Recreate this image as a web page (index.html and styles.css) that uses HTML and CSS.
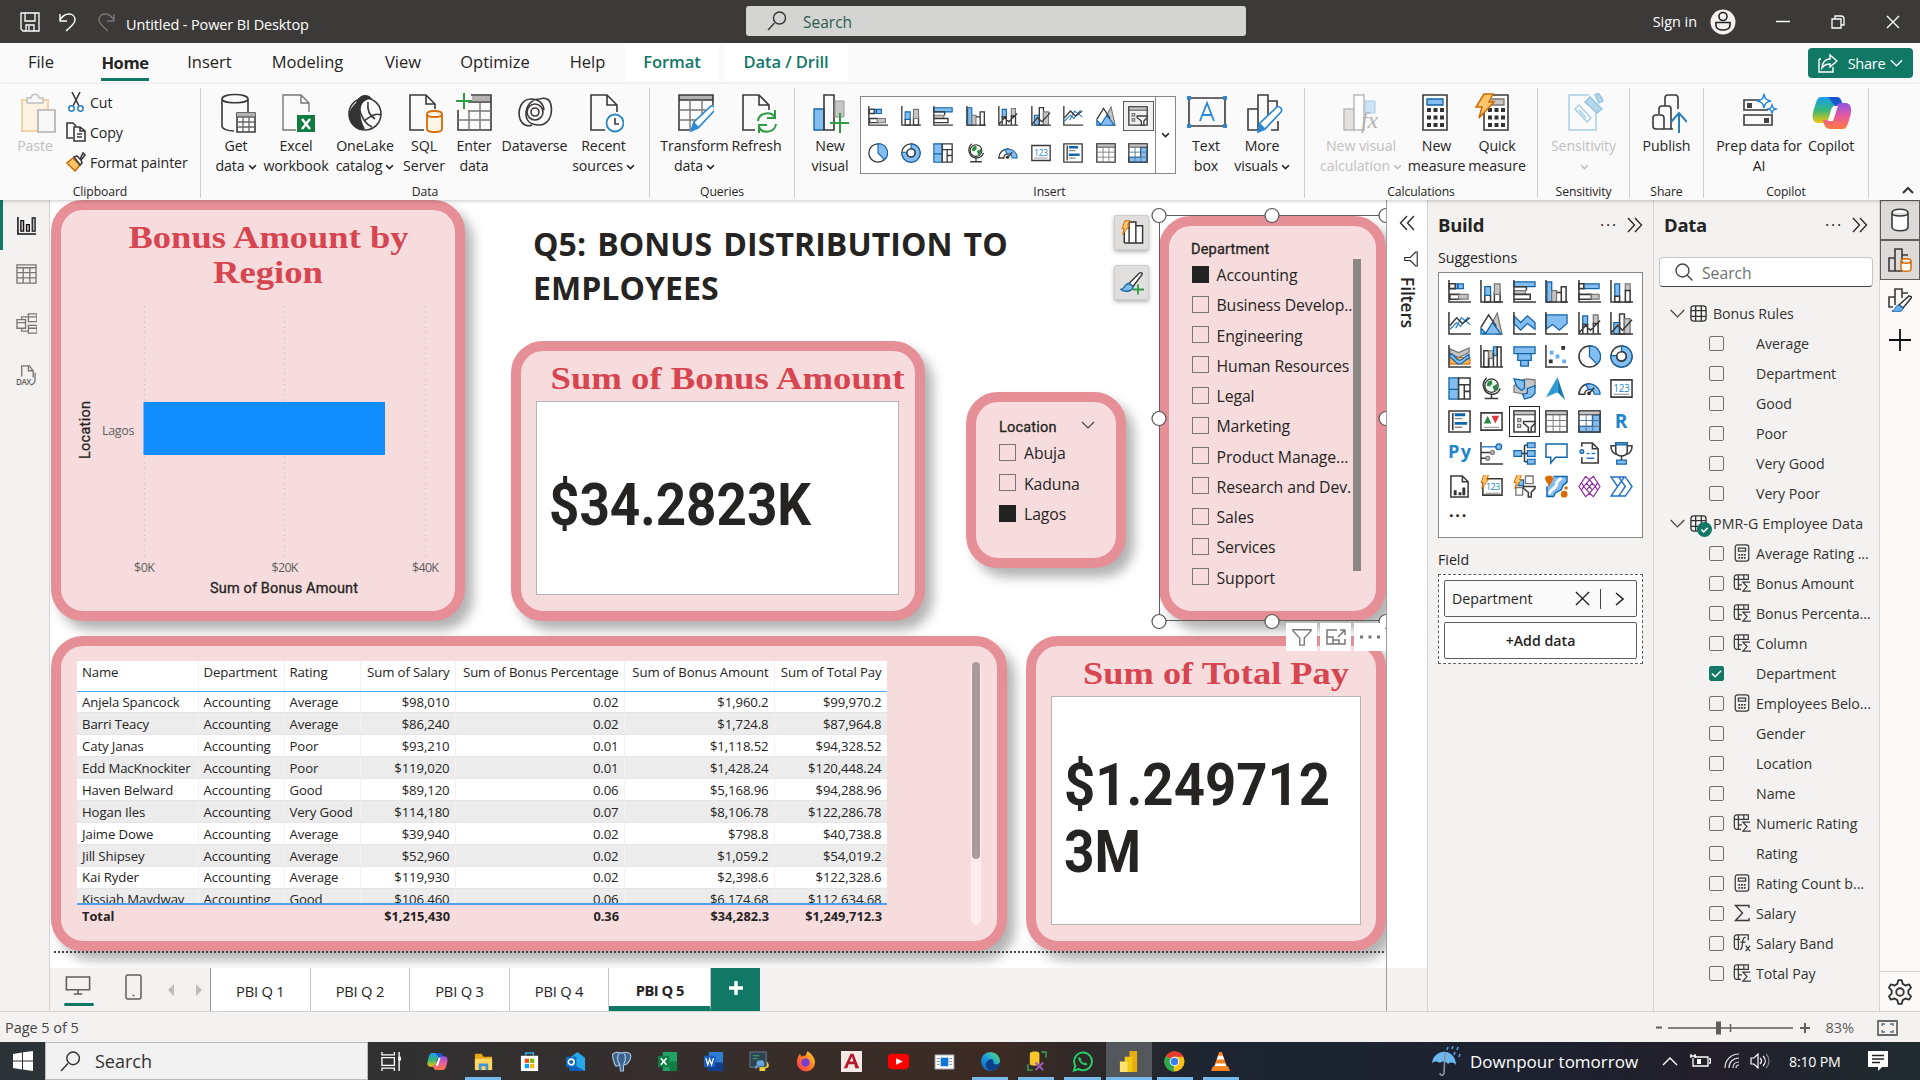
FILE: index.html
```html
<!DOCTYPE html>
<html lang="en">
<head>
<meta charset="utf-8">
<title>Untitled - Power BI Desktop</title>
<link rel="stylesheet" href="styles.css">
</head>
<body>
<svg class="defs" aria-hidden="true">
<defs>
<linearGradient id="cpA" x1="0" y1="0" x2="0" y2="1"><stop offset="0" stop-color="#1a9df0"/><stop offset=".5" stop-color="#35b87a"/><stop offset="1" stop-color="#f4c20a"/></linearGradient>
<linearGradient id="cpB" x1="0" y1="0" x2="0" y2="1"><stop offset="0" stop-color="#8b52e8"/><stop offset=".5" stop-color="#e85aa0"/><stop offset="1" stop-color="#ff7a3d"/></linearGradient>
<linearGradient id="edgeG" x1="0" y1="1" x2="1" y2="0"><stop offset="0" stop-color="#0c59b8"/><stop offset=".5" stop-color="#1c9fe0"/><stop offset="1" stop-color="#5fe06a"/></linearGradient>
<linearGradient id="ffG" x1="0" y1="1" x2="1" y2="0"><stop offset="0" stop-color="#ff2d55"/><stop offset=".6" stop-color="#ff8a1e"/><stop offset="1" stop-color="#ffe14a"/></linearGradient>
</defs>
</svg>
<svg class="syms" aria-hidden="true">
<symbol id="chev" viewBox="0 0 10 6"><path d="M1.2 1l3.8 3.8L8.8 1" fill="none" stroke="currentColor" stroke-width="1.8"/></symbol>
<symbol id="chevthin" viewBox="0 0 15 9"><path d="M.7 1l6.800 6.800L14.300 1" fill="none" stroke="currentColor" stroke-width="1.200"/></symbol>
<symbol id="dbl" viewBox="0 0 16 16"><path d="M1 1l6.500 7L1 15M8 1l6.500 7L8 15" fill="none" stroke="currentColor" stroke-width="1.300"/></symbol>
<symbol id="mag" viewBox="0 0 20 20"><path d="M1 19l6.500-7" class="cur"/><circle cx="12.500" cy="7" r="6" class="cur"/></symbol>
<symbol id="funnel" viewBox="0 0 20 18"><path d="M1 1h18v2l-7 7v7H8v-7L1 3z" class="cur"/></symbol>
<symbol id="bolt" viewBox="0 0 12 20"><path d="M5 .8h6L8.500 7H11L2 19l2-8H1z" fill="#fbc56b" stroke="#d06a00" stroke-width="1.2"/></symbol>

<!-- visual gallery -->
<symbol id="v-sbar" viewBox="0 0 24 24"><path class="b" d="M1.500 4h9v5h-9zM10 4h6v5h-6z"/><path class="k" d="M1.500 4h6v5h-6z" fill="#fff"/><path class="k" d="M2 15h10v5H2z"/><path class="g" d="M11 15h10v5H11z"/><path class="k" d="M1 0v23h23"/></symbol>
<symbol id="v-scol" viewBox="0 0 24 24"><path class="k" d="M5 16h6v7H5zM15 13h6v10h-6z"/><path class="b" d="M5 7h6v9H5z"/><path class="g" d="M15 4h6v11h-6z"/><path class="k" d="M1 0v23h23"/></symbol>
<symbol id="v-cbar" viewBox="0 0 24 24"><path class="b" d="M1 2h22v5H1z"/><path class="g" d="M1 11h12v4H1z"/><path class="k" d="M1 7h13v4M1 15h17v5H1"/><path class="k" d="M1 0v23h23"/></symbol>
<symbol id="v-ccol" viewBox="0 0 24 24"><path class="b" d="M2 2h5v21H2z"/><path class="g" d="M7 11h5v12H7z"/><path class="k" d="M12 13h5v10M18 7h4v16h-5V7z"/><path class="k" d="M1 0v23h23"/></symbol>
<symbol id="v-hbar" viewBox="0 0 24 24"><path class="b" d="M6 4h16v5H6z"/><path class="k" d="M1 4h5v5H1zM1 15h13v5H1z"/><path class="g" d="M14 15h8v5h-8z"/><path class="k" d="M1 0v23h23"/></symbol>
<symbol id="v-hcol" viewBox="0 0 24 24"><path class="b" d="M5 4h5v13H5z"/><path class="g" d="M16 4h5v7h-5z"/><path class="k" d="M5 17h5v6H5zM16 11h5v12h-5z"/><path class="k" d="M1 0v23h23"/></symbol>
<symbol id="v-line" viewBox="0 0 24 24"><path d="M2 18l7-7 4 4 8-10M8 17l6-11 9 7" fill="none" stroke="#2b7fc4" stroke-width="1.300"/><path class="k" d="M2 14l7-8 6 6 8-6M1 0v23h23"/></symbol>
<symbol id="v-area" viewBox="0 0 24 24"><path class="g" d="M13 11l5-10 5 22h-6z"/><path class="k" d="M1 16L9 3l8 12"/><path class="b" d="M1 17l5 5-5 1zM6 22l7-11 9 12H2z"/></symbol>
<symbol id="v-sarea" viewBox="0 0 24 24"><path class="b" d="M1 4l7 7 7-7 8 7v7l-8-6-7 7-7-7z"/><path class="k" d="M1 0v23h23"/></symbol>
<symbol id="v-harea" viewBox="0 0 24 24"><path class="b" d="M1 3h22v9l-8 7-7-6-7 5z"/><path class="k" d="M1 0v23h23"/></symbol>
<symbol id="v-lscol" viewBox="0 0 24 24"><path class="b" d="M5 4h5v9H5z"/><path class="g" d="M16 3h5v9h-5z"/><path class="k" d="M5 13h5v10H5zM16 12h5v11h-5zM1 22l7-8 5 5 10-10M1 0v23h23"/></symbol>
<symbol id="v-lccol" viewBox="0 0 24 24"><path class="b" d="M4 11h6v12H4z"/><path class="k" d="M10 2h5v21h-5z"/><path class="g" d="M15 7h6v16h-6z"/><path class="k" d="M1 22l7-8 5 5 10-11M1 0v23h23"/></symbol>
<symbol id="v-ribbon" viewBox="0 0 24 24"><path d="M2 13h21v7H2z" fill="#f5b35a" stroke="#d06a00"/><path class="g" d="M2 4l9 4 11-5v5l-11 5-9-4z"/><path class="b" d="M2 9c5 0 6 7 10 7s5-5 10-6v4c-5 1-6 6-10 6S6 14 2 13z"/><path class="k" d="M1 0v23h23"/></symbol>
<symbol id="v-water" viewBox="0 0 24 24"><path class="k" d="M4 6h5v17H4z"/><path class="g" d="M9 6h5v8H9z"/><path class="b" d="M14 2h4v9h-4z"/><path class="k" d="M14 8v15M18 2h4v21h-4zM9 14v9M1 0v23h23"/></symbol>
<symbol id="v-funnel" viewBox="0 0 24 24"><path class="b" d="M1 2h22v7H1zM5 9h14v7H5zM8 16h8v6H8z"/></symbol>
<symbol id="v-scatter" viewBox="0 0 24 24"><path d="M17 1h4v4h-4zM4 15h4v4H4z" fill="#333"/><path d="M5 6h4v4H5zM11 10h4v4h-4zM18 15h4v4h-4z" fill="#6aaeea"/><path class="k" d="M1 0v23h23"/></symbol>
<symbol id="v-pie" viewBox="0 0 24 24"><circle class="k" cx="12" cy="12" r="11"/><path class="b" d="M12 1a11 11 0 0 1 8 19l-8-8z"/></symbol>
<symbol id="v-donut" viewBox="0 0 24 24"><circle class="k" cx="12" cy="12" r="11"/><path class="b" fill-rule="evenodd" d="M12 1a11 11 0 1 1-11 10h6a5 5 0 1 0 5-4.500z"/><circle class="k" cx="12" cy="12" r="5"/></symbol>
<symbol id="v-tree" viewBox="0 0 24 24"><path class="b" d="M1 1h10v12H1zM1 13h10v10H1z"/><path class="k" d="M11 1h12v22H11zM11 8h12M17 8v15M17 15h6"/></symbol>
<symbol id="v-map" viewBox="0 0 24 24"><circle cx="12" cy="9" r="7" fill="#f2fbf4" stroke="#333" stroke-width="1.300"/><path d="M8 5l4-2 1 4-3 3-3-1zM13 10l5-3v5l-3 3z" fill="#2e8b45"/><path class="k" d="M7 1c-6 5-4 16 5 17 5 0 8-3 9-6M12 18v4M5 22.500h14"/></symbol>
<symbol id="v-filled" viewBox="0 0 24 24"><path class="g" d="M10 3l4-1 9 1v8l-6 3-4 4-12-2V9z"/><path class="b" d="M1 2l7 1 4 1v8l-3 2-5-4z"/><path class="b" d="M15 12l8-3v8l-4 4-7 2-2-5 5-1z"/></symbol>
<symbol id="v-azure" viewBox="0 0 24 24"><path d="M13 0L1 21l12-5z" fill="#2f9bd4"/><path d="M13 0l8 24-8-8z" fill="#1679b5"/></symbol>
<symbol id="v-gauge" viewBox="0 0 24 24"><path class="k" d="M1 18a11 11 0 0 1 11-11l0 6a5 5 0 0 0-5 5z"/><path class="b" d="M8 8a11 11 0 0 1 15 10h-6a5 5 0 0 0-6-5z"/><path class="k" d="M11 18l6-7"/><circle cx="11.500" cy="17" r="2" fill="#333"/></symbol>
<symbol id="v-card" viewBox="0 0 24 24"><path class="k" fill="#fff" d="M1 3h22v18H1z"/><path d="M4 18h16" stroke="#888"/><text x="3.500" y="15.500" font-size="10.500" textLength="17" class="t123">123</text></symbol>
<symbol id="v-mcard" viewBox="0 0 24 24"><path class="k" d="M1 1h22v22H1zM5 3v18"/><path d="M7 5h11M7 14h13" stroke="#1064a8" stroke-width="3"/><path d="M7 9h8M7 18h8" stroke="#888" stroke-width="1.500"/></symbol>
<symbol id="v-kpi" viewBox="0 0 24 24"><path class="k" d="M1 3h22v18H1z"/><path d="M4 14l4-8 4 8z" fill="#2e8b45"/><path d="M12 6h8l-4 8z" fill="#e03a3a"/><path d="M4 18h16" stroke="#888"/></symbol>
<symbol id="v-slicer" viewBox="0 0 24 24"><path class="k" d="M1 1h22v22H1z"/><path d="M1 1h22v4H1z" fill="#c8c6c4" stroke="#333"/><path d="M5 9h3v3H5zM5 15h3v3H5z" fill="none" stroke="#777" stroke-width="1.500"/><path class="k" fill="#f7f7f7" d="M11 12h12v2l-4 4v5h-3v-5l-5-4z"/></symbol>
<symbol id="v-table" viewBox="0 0 24 24"><path class="k" d="M1 1h22v22H1z"/><path d="M1 1h22v4H1z" fill="#c8c6c4" stroke="#333"/><path d="M1 11h22M1 17h22M8.500 5v18M15.500 5v18" stroke="#777" fill="none"/></symbol>
<symbol id="v-matrix" viewBox="0 0 24 24"><path class="b" d="M15 5h8v18H1v-6h14z"/><path class="k" d="M1 1h22v22H1z"/><path d="M1 1h22v4H1z" fill="#c8c6c4" stroke="#333"/><path d="M1 11h22M1 17h22M8.500 5v18M15.500 5v18" stroke="#4a6f94" fill="none"/></symbol>
<symbol id="v-r" viewBox="0 0 24 24"><text x="5" y="19" font-size="20" font-weight="700" class="t123">R</text></symbol>
<symbol id="v-py" viewBox="0 0 24 24"><text x="0" y="17" font-size="19" font-weight="700" textLength="24" class="t123">Py</text></symbol>
<symbol id="v-infl" viewBox="0 0 24 24"><path class="k" d="M1 0v23h23M1 11h10M1 17h6"/><path d="M1 5h17" stroke="#2b7fc4" stroke-width="1.500"/><circle class="b" cx="19.500" cy="5" r="3"/><circle class="g" cx="13" cy="11" r="2"/><circle class="g" cx="8" cy="17" r="2"/></symbol>
<symbol id="v-decomp" viewBox="0 0 24 24"><path class="k" d="M9 12h6M12 3.500v17M12 3.500h3M12 20.500h3"/><path class="b" d="M1 9h8v6H1zM15 1h8v5h-8zM15 9h8v6h-8zM15 18h8v5h-8z"/></symbol>
<symbol id="v-qa" viewBox="0 0 24 24"><path d="M1 2h22v14H11l-5 6v-6H1z" fill="#fff" stroke="#1064a8" stroke-width="1.500"/></symbol>
<symbol id="v-narr" viewBox="0 0 24 24"><path class="k" d="M4 5V1h11l6 6v15H4v-6M15 1v6h6"/><path d="M9 12h3M14 12h4M9 17h8" stroke="#2b7fc4" stroke-width="1.500"/><circle class="b" cx="4" cy="10" r="2"/></symbol>
<symbol id="v-goal" viewBox="0 0 24 24"><path class="k" d="M6 4H1c0 6 2 8 6 9M18 4h5c0 6-2 8-6 9M6 1h12v9c0 6-12 6-12 0zM12 15v4"/><path class="b" d="M7 19h10v4H7zM6 1h12v2H6z"/></symbol>
<symbol id="v-pag" viewBox="0 0 24 24"><path class="k" d="M3 1h12l6 6v16H3zM15 1v6h6"/><path d="M6 16h3v5H6zM11 18h3v3h-3zM15 13h3v8h-3z" fill="#333"/></symbol>
<symbol id="v-ncard" viewBox="0 0 24 24"><path class="k" fill="#fff" d="M3 4h20v17H3z"/><path d="M6 19h15" stroke="#888"/><text x="6" y="16" font-size="10" textLength="15" class="t123">123</text><use href="#bolt" x="-1" y="-1" width="12" height="16"/></symbol>
<symbol id="v-nslicer" viewBox="0 0 24 24"><path d="M13 1h8v8h-8zM3 13h7v8H3z" fill="#fff" stroke="#777" stroke-width="1.400"/><path class="b" d="M6 5h5v6H6z"/><use href="#bolt" x="-1" y="-1" width="12" height="16"/><path class="k" fill="#fff" d="M11 12h12v2l-4 4v5h-3v-5l-5-4z"/></symbol>
<symbol id="v-arc" viewBox="0 0 24 24"><path d="M9 1.500h14v6l-4 3-2 5-6 3-2 4H2V12" fill="#84bdf0" stroke="#1064a8" stroke-width="1.500"/><path d="M17 3c-2 3-5 3-5 7s-6 4-8 10" fill="none" stroke="#fff" stroke-width="3"/><path d="M0 3.500C1-.5 8-.5 8.500 3.500 8.500 7 5 9 4.500 13 4 9 0 7 0 3.500z" fill="#d96b00"/><circle cx="20" cy="20" r="3.500" fill="#d96b00"/><circle cx="22" cy="13.500" r="1.800" fill="#d96b00"/></symbol>
<symbol id="v-apps" viewBox="0 0 24 24"><path d="M8 1.500L12 5l4-3.500L23 12l-7 10.500-4-3.500-4 3.500L1 12zM12 5l6 7-6 7-6-7zM9 8.500l6 7M15 8.500l-6 7M6 12L3.500 8M18 12l2.500-4M6 12l-2.500 4M18 12l2.500 4" fill="#fff" fill-opacity=".6" stroke="#8b2a9c" stroke-width="1.200"/></symbol>
<symbol id="v-auto" viewBox="0 0 24 24"><path d="M1 2h15l7 10-7 10H1l7-10zM9 2l7 10-7 10M8 12l7-10" fill="none" stroke="#2070c8" stroke-width="1.500"/></symbol>

<!-- field icons -->
<symbol id="f-table" viewBox="0 0 18 18"><rect x="1" y="1" width="16" height="16" rx="3" class="cur"/><path class="cur" d="M1 6h16M1 12h16M6 1v16M12 1v16"/></symbol>
<symbol id="f-calc" viewBox="0 0 18 20"><rect x="1.500" y="1" width="15" height="18" rx="2.500" class="cur"/><path class="cur" d="M5 4.500h8v3.500H5z"/><path d="M5 12h8M5 15.500h8" stroke="currentColor" stroke-width="2" stroke-dasharray="2 1"/></symbol>
<symbol id="f-sum" viewBox="0 0 20 20"><path class="cur" d="M9 17H4a2.500 2.500 0 0 1-2.500-2.500v-11A2.500 2.500 0 0 1 4 1h13v5H1.500M6 1v16M12 1v5M6 12h4"/><path class="cur" d="M19 9h-8l4.500 5L11 19h9"/></symbol>
<symbol id="f-fx" viewBox="0 0 20 20"><path class="cur" d="M6 17H4a2.500 2.500 0 0 1-2.500-2.500v-11A2.500 2.500 0 0 1 4 1h13v6M6 1v16M1.500 6H8"/><path class="cur" d="M14 4c-3-1-3 3-3.500 7s-1 7-3 6M8 9h6M14 13l5 6M19 13l-5 6"/></symbol>
<symbol id="f-sigma" viewBox="0 0 18 18"><path class="cur" d="M16 4V1.500H2.500l7 7.500-7 7.500H16V14"/></symbol>
<symbol id="copilot" viewBox="0 0 40 40"><path d="M9 4h13c5 0 6 6 7 9h-6c-3 0-4 3-5 8-2 7-3 9-8 9H7c-8 0-7-8-5-14S5 4 9 4z" fill="url(#cpA)"/><path d="M16 4h9c4 0 5 5 6 9h-8z" fill="#1a56d0"/><path d="M31 36H18c-5 0-6-5-7-9h6c3 0 4-4 5-8 2-7 3-9 8-9h3c7 0 7 8 5 14s-3 12-7 12z" fill="url(#cpB)"/><path d="M22 13h4l-5 15h-5z" fill="#fff"/></symbol>
</svg>

<header class="titlebar">
  <div class="tb-left">
    <svg class="i20" viewBox="0 0 20 20"><path d="M1 1h18v18H3l-2-2zM5 1v8h10V1M6 19v-6h8v6M9 14v4" fill="none" stroke="#fff" stroke-width="1.300"/></svg>
    <svg class="i20" viewBox="0 0 20 20"><path d="M2 2v7h7M2 8c3-5 6-6 9-6 4 0 6 3 6 6 0 4-4 6-9 11" fill="none" stroke="#fff" stroke-width="1.400"/></svg>
    <svg class="i20" viewBox="0 0 20 20"><path d="M18 2v7h-7M18 8c-3-5-6-6-9-6-4 0-6 3-6 6 0 4 4 6 9 11" fill="none" stroke="#777" stroke-width="1.400"/></svg>
    <span class="tb-title">Untitled - Power BI Desktop</span>
  </div>
  <div class="tb-search"><svg class="i20"><use href="#mag"/></svg><span>Search</span></div>
  <div class="tb-right">
    <span class="signin">Sign in</span>
    <svg class="avatar" viewBox="0 0 26 26"><circle cx="13" cy="13" r="12.500" fill="#f3f2f1"/><circle cx="13" cy="7.500" r="4" fill="none" stroke="#222" stroke-width="1.600"/><path d="M6 13.500h14v3c0 6-14 6-14 0z" fill="none" stroke="#222" stroke-width="1.600"/></svg>
    <svg class="w14" viewBox="0 0 14 14"><path d="M0 6.500h14" stroke="#fff" stroke-width="1.500"/></svg>
    <svg class="w14" viewBox="0 0 14 14"><path d="M1 4h9v9H1zM4 4V1h6c2 0 3 1 3 3v6h-3" fill="none" stroke="#fff" stroke-width="1.300"/></svg>
    <svg class="w14" viewBox="0 0 14 14"><path d="M1 1l12 12M13 1L1 13" stroke="#fff" stroke-width="1.400"/></svg>
  </div>
</header>

<nav class="tabs">
  <a class="t1">File</a><a class="t2 on"><b>Home</b></a><a class="t3">Insert</a><a class="t4">Modeling</a><a class="t5">View</a><a class="t6">Optimize</a><a class="t7">Help</a><a class="t8 ctx">Format</a><a class="t9 ctx">Data / Drill</a>
  <button class="share"><svg class="i20" viewBox="0 0 20 20"><path d="M1 6v13h14v-5M1 6h2M12 2l7 6-7 6v-3c-4 0-6 1-8 4 0-6 4-9 8-9z" fill="none" stroke="#fff" stroke-width="1.400"/></svg><span>Share</span><svg class="shc" viewBox="0 0 14 8"><path d="M1 1l6 6 6-6" fill="none" stroke="#fff" stroke-width="1.500"/></svg></button>
</nav>

<section class="ribbon">
  <div class="grp g-clip">
    <div class="btns">
      <div class="rb off paste"><svg class="ric" viewBox="0 0 36 40"><path d="M2 7h26v31H2z" fill="#fdf3e2" stroke="#f0d4a8" stroke-width="2"/><path d="M7 8V5h4c1-5 7-5 8 0h4v5H7z" fill="#f8f8f8" stroke="#c2c0be" stroke-width="1.500"/><path d="M18 17h17v22H18z" fill="#f8f8f8" stroke="#b5b3b1" stroke-width="1.700"/></svg><span>Paste</span></div>
      <ul class="clip">
        <li><svg class="i20" viewBox="0 0 20 20"><path d="M6 0l7 14M14 0L7 14" class="k"/><circle cx="5.500" cy="16.500" r="2.700" fill="none" stroke="#2b7fc4" stroke-width="1.500"/><circle cx="14.500" cy="16.500" r="2.700" fill="none" stroke="#2b7fc4" stroke-width="1.500"/></svg>Cut</li>
        <li><svg class="i20" viewBox="0 0 20 20"><path class="k" d="M7 16H1V1h6l3 3M8 5h6l5 4v10H8zM14 5v4h5M11 12h5M11 15h5"/></svg>Copy</li>
        <li><svg class="i20" viewBox="0 0 20 20"><path d="M7 6l7 7-5 6-8-8z" fill="#fbc56b" stroke="#d06a00" stroke-width="1.500"/><path class="k" fill="#fff" d="M8 5l3-1 3 3 3-6 2 2-4 5 1 3-2 2z"/></svg>Format painter</li>
      </ul>
    </div><p>Clipboard</p>
  </div>
  <div class="grp g-data">
    <div class="btns">
      <div class="rb"><svg class="ric r3" viewBox="0 0 36 40"><path class="k" d="M2 6v27c0 3 6 5 12 5M2 6c0-6 26-6 26 0v13M2 6c0 5 26 5 26 0"/><path class="k" d="M17 20h18v19H17z" fill="#fff"/><path d="M17 20h18v4H17z" fill="#b5b3b1"/><path class="k1" d="M17 24h18M17 29h18M17 34h18M23 24v15M29 24v15"/></svg><span>Get<br>data<svg class="cv"><use href="#chev"/></svg></span></div>
      <div class="rb"><svg class="ric r3" viewBox="0 0 36 40"><path class="g0" d="M16 37H3V2h18l8 8v9M21 2v8h8"/><path d="M17 22h18v17H17z" fill="#107c41"/><path d="M22 26l8 10M30 26l-8 10" stroke="#fff" stroke-width="2.500"/></svg><span>Excel<br>workbook</span></div>
      <div class="rb"><svg class="ric" viewBox="0 0 36 40"><ellipse class="k" cx="18" cy="21" rx="16" ry="16"/><path d="M9 10C12 0 22 0 25 6c-6 0-10 3-11 8s-1 13 4 22C3 38-4 21 9 10z" fill="#333"/><path class="k" d="M12 15c2 8 6 16 13 19M21 9c-1 8 2 14 7 17M34 22c-5-2-9 0-17 6"/></svg><span>OneLake<br>catalog<svg class="cv"><use href="#chev"/></svg></span></div>
      <div class="rb"><svg class="ric r2" viewBox="0 0 36 40"><path class="k" d="M17 37H3V2h16l9 9v5M19 2v9h9"/><path d="M20 21c0-4 15-4 15 0v15c0 4-15 4-15 0zM20 21c0 4 15 4 15 0" fill="#fff6e8" stroke="#d96b00" stroke-width="1.800"/></svg><span>SQL<br>Server</span></div>
      <div class="rb"><svg class="ric" viewBox="0 0 36 40"><path d="M16 3h19v5H16z" fill="#b5b3b1"/><path class="k" d="M15 2h20v35H2V17M12 9h23"/><path class="g0" d="M12 18h23M2 27h33M13 17v20M24 9v28"/><path d="M8 0v16M0 8h16" stroke="#2e9b45" stroke-width="2"/></svg><span>Enter<br>data</span></div>
      <div class="rb"><svg class="ric" viewBox="0 0 36 40"><path class="k" d="M14 6c-9 0-14 10-11 20 2 6 8 8 12 6M14 6c8 0 12 4 13 11M22 32c9 0 14-9 12-20-1-6-6-8-11-6M22 32c-8 0-13-4-13-11 0-8 5-15 14-15"/><circle class="k" cx="18" cy="19" r="8"/><circle class="k" cx="18" cy="19" r="4"/></svg><span>Dataverse</span></div>
      <div class="rb"><svg class="ric r3" viewBox="0 0 36 40"><path class="k" d="M17 37H3V2h16l10 10v7M19 2v10h10"/><circle cx="27" cy="30" r="8.500" fill="#fff" stroke="#2b88c4" stroke-width="1.800"/><path class="k" d="M27 25v6h4"/></svg><span>Recent<br>sources<svg class="cv"><use href="#chev"/></svg></span></div>
    </div><p>Data</p>
  </div>
  <div class="grp g-query">
    <div class="btns">
      <div class="rb"><svg class="ric r2" viewBox="0 0 36 40"><path d="M1 2h34v5H1z" fill="#b5b3b1"/><path class="k" d="M12 37H1V2h34v10M1 7h34"/><path class="g0" d="M1 17h28M1 27h19M12 7v30M24 7v15"/><path d="M13 38l3-9 17-16c3-1 5 2 3 5L20 35z" fill="#fff" stroke="#2b88d4" stroke-width="1.700"/><path d="M13 38l3-9 5 5z" fill="#2b88d4"/></svg><span>Transform<br>data<svg class="cv"><use href="#chev"/></svg></span></div>
      <div class="rb"><svg class="ric r4" viewBox="0 0 36 40"><path class="k" d="M14 37H2V2h16l10 10v5M18 2v10h10"/><path d="M17 28c1-9 14-10 17-3M34 17v8h-8M35 31c-1 9-14 10-17 3M18 40v-8h8" fill="none" stroke="#2e9b45" stroke-width="2"/></svg><span>Refresh</span></div>
    </div><p>Queries</p>
  </div>
  <div class="grp g-insert">
    <div class="btns">
      <div class="rb"><svg class="ric r2" viewBox="0 0 36 40"><path class="b" d="M1 16h10v21H1z"/><path class="k" d="M11 2h10v35H11z"/><path d="M22 8h9v16h-9z" fill="#c8c6c4" stroke="#999"/><path d="M27 20v20M17 30h19" stroke="#2e9b45" stroke-width="2"/></svg><span>New<br>visual</span></div>
      <div class="gallery">
        <div class="gal-grid">
          <i><svg><use href="#v-sbar"/></svg></i><i><svg><use href="#v-scol"/></svg></i><i><svg><use href="#v-cbar"/></svg></i><i><svg><use href="#v-ccol"/></svg></i><i><svg><use href="#v-lscol"/></svg></i><i><svg><use href="#v-lccol"/></svg></i><i><svg><use href="#v-line"/></svg></i><i><svg><use href="#v-area"/></svg></i><i class="sel"><svg><use href="#v-slicer"/></svg></i>
          <i><svg><use href="#v-pie"/></svg></i><i><svg><use href="#v-donut"/></svg></i><i><svg><use href="#v-tree"/></svg></i><i><svg><use href="#v-map"/></svg></i><i><svg><use href="#v-gauge"/></svg></i><i><svg><use href="#v-card"/></svg></i><i><svg><use href="#v-mcard"/></svg></i><i><svg><use href="#v-table"/></svg></i><i><svg><use href="#v-matrix"/></svg></i>
        </div>
        <div class="gal-more"><svg class="cv"><use href="#chev"/></svg></div>
      </div>
      <div class="rb"><svg class="ric wide" viewBox="0 0 40 40"><path class="k" d="M2 5h36v28H2z"/><path d="M0 3h4v4H0zM36 3h4v4h-4zM0 31h4v4H0zM36 31h4v4h-4z" fill="#2b88d4"/><path d="M13 28l7-18 7 18M15 22h10" fill="none" stroke="#2b88d4" stroke-width="1.800"/></svg><span>Text<br>box</span></div>
      <div class="rb"><svg class="ric r4" viewBox="0 0 36 40"><path class="k" d="M11 37H1V16h10M11 37V2h10v22M21 8h9v6M31 28v9h-7M11 37h3"/><path d="M11 39l2-9 17-16c3-1 6 2 4 5L18 36z" fill="#fff" stroke="#2b88d4" stroke-width="1.700"/><path d="M11 39l2-9 6 6z" fill="#2b88d4"/></svg><span>More<br>visuals<svg class="cv"><use href="#chev"/></svg></span></div>
    </div><p>Insert</p>
  </div>
  <div class="grp g-calc">
    <div class="btns">
      <div class="rb off"><svg class="ric" viewBox="0 0 36 40"><path d="M1 16h10v21H1z" fill="#e4e2e0" stroke="#bbb" stroke-width="1.500"/><path d="M11 2h10v35H11z" fill="#fff" stroke="#bbb" stroke-width="1.500"/><path d="M22 8h10v12h-10z" fill="#cfe4f5" stroke="#a9cce8"/><text x="18" y="35" font-size="23" textLength="17" lengthAdjust="spacingAndGlyphs" font-style="italic" class="fx">fx</text></svg><span>New visual<br>calculation<svg class="cv"><use href="#chev"/></svg></span></div>
      <div class="rb"><svg class="ric l2" viewBox="0 0 36 40"><path class="k" d="M6 2h24v35H6z" fill="#fff"/><path class="b" d="M10 6h16v6H10z"/><path class="dots" d="M10 17h17M10 24.500h17M10 32h17"/></svg><span>New<br>measure</span></div>
      <div class="rb"><svg class="ric l7" viewBox="0 0 36 40"><path class="k" d="M9 2h24v35H9z" fill="#fff"/><path class="g" d="M17 6h12v6H17z"/><path class="dots" d="M13 17h17M13 24.500h17M13 32h17"/><path d="M9 1h9l-4 8h5L4 25l3-11H1z" fill="#fbc56b" stroke="#d06a00" stroke-width="1.500"/></svg><span>Quick<br>measure</span></div>
    </div><p>Calculations</p>
  </div>
  <div class="grp g-sens">
    <div class="btns"><div class="rb off"><svg class="ric r4" viewBox="0 0 36 40"><path d="M1 2h20M28 16v21H1V2M7 16l4-4 12 13-4 4zM11 17l7 8" fill="none" stroke="#a6cfe6" stroke-width="1.500"/><path d="M17 9l5-5 12 12-5 4zM27 2l3-2 4 5 1 3-4 2z" fill="#b5d8ec" stroke="#8fc0de" stroke-width="1.300"/></svg><span>Sensitivity<br><svg class="cv"><use href="#chev"/></svg></span></div></div><p>Sensitivity</p>
  </div>
  <div class="grp g-share">
    <div class="btns"><div class="rb"><svg class="ric r4" viewBox="0 0 36 40"><path class="k" d="M22 36H5a3 3 0 0 1-3-3V25a3 3 0 0 1 3-3h5a3 3 0 0 1 3 3v11M8 21v-5a3 3 0 0 1 3-3h7a3 3 0 0 1 2 3v20M14 13V5a3 3 0 0 1 3-3h7a3 3 0 0 1 3 3v11"/><path d="M28 40V21M20 29l8-9 8 9" fill="none" stroke="#2b7fb4" stroke-width="2"/></svg><span>Publish</span></div></div><p>Share</p>
  </div>
  <div class="grp g-cop">
    <div class="btns">
      <div class="rb"><svg class="ric r2" viewBox="0 0 36 40"><path class="k" d="M18 7H2v10h24M2 22h28v10H2z"/><path d="M5 10h5v5H5zM22 25h5v5h-5z" fill="#444"/><path d="M22 1c1 5 2 6 7 7-5 1-6 2-7 7-1-5-2-6-7-7 5-1 6-2 7-7zM30 12c1 3 1 3 4 4-3 1-3 1-4 4-1-3-1-3-4-4 3-1 3-1 4-4z" fill="#fff" stroke="#2b88d4" stroke-width="1.500"/></svg><span>Prep data for<br>AI</span></div>
      <div class="rb"><svg class="ric wide" viewBox="0 0 40 40"><use href="#copilot"/></svg><span>Copilot</span></div>
    </div><p>Copilot</p>
  </div>
  <svg class="collapse" viewBox="0 0 12 8"><path d="M1 7l5-5 5 5" fill="none" stroke="#333" stroke-width="2"/></svg>
</section>

<main class="work">
  <aside class="rail">
    <div class="on"><svg viewBox="0 0 22 22"><path d="M2 2v18h19" fill="none" stroke="#111" stroke-width="1.600"/><path d="M5 6h3v11H5zM11 10h3v7h-3zM17 3h3v14h-3z" fill="#bbb" stroke="#111" stroke-width="1.300"/></svg></div>
    <div class="up2"><svg viewBox="0 0 22 22"><path d="M1 2h20v19H1zM1 5h20M1 10h20M1 15.500h20M7.500 5v16M14.500 5v16" class="gr"/></svg></div>
    <div class="up2"><svg viewBox="0 0 22 22"><path d="M1 7h9v9H1zM1 10h9M13 1h9v8h-9zM13 4h9M13 13h9v8h-9zM13 16h9M6 7V4h7M6 16v3h7" class="gr"/></svg></div>
    <div><svg viewBox="0 0 22 22"><path d="M6 12V1h8l4 5v7M13 1v5h5M20 8v7c0 3-2 5-4 6" class="gr"/><text x="0" y="21" font-size="8.500" textLength="16" class="dax">DAX</text></svg></div>
  </aside>

  <div class="center">
    <div class="canvas">
      <article class="vis c-region">
        <svg width="394" height="401" viewBox="61 210 394 401">
          <g class="ser"><text x="128.500" y="248" textLength="280" lengthAdjust="spacingAndGlyphs">Bonus Amount by</text><text x="213" y="283" textLength="110" lengthAdjust="spacingAndGlyphs">Region</text></g>
          <path d="M144.500 306v251M284.500 306v251M425.500 306v251" class="grid"/>
          <rect x="143.500" y="402" width="241.500" height="53" fill="#118dff"/>
          <text x="102" y="434.500" class="ax" textLength="32.500">Lagos</text>
          <text x="134" y="572" class="ax" textLength="21">$0K</text><text x="271.500" y="572" class="ax" textLength="27">$20K</text><text x="412" y="572" class="ax" textLength="27">$40K</text>
          <text x="210" y="593" class="din" textLength="148">Sum of Bonus Amount</text>
          <text transform="translate(90 459) rotate(-90)" class="din" textLength="58">Location</text>
        </svg>
      </article>
      <h1>Q5: BONUS DISTRIBUTION TO<br>EMPLOYEES</h1>
      <article class="vis c-bonus">
        <svg width="394" height="260" viewBox="521 351 394 260">
          <g class="ser"><text x="550.500" y="389" textLength="354" lengthAdjust="spacingAndGlyphs">Sum of Bonus Amount</text></g>
          <rect x="536.500" y="401.500" width="362" height="193" fill="#fff" stroke="#b8b4b3"/>
          <text x="549" y="525" class="big" textLength="262" lengthAdjust="spacingAndGlyphs">$34.2823K</text>
        </svg>
      </article>
      <article class="vis c-loc">
        <h3>Location <svg class="lc" viewBox="0 0 14 8"><path d="M1 1l6 6 6-6" fill="none" stroke="#444" stroke-width="1.200"/></svg></h3>
        <ul class="slicer"><li><i></i><span>Abuja</span></li><li><i></i><span>Kaduna</span></li><li class="on"><i></i><span>Lagos</span></li></ul>
      </article>
      <article class="vis c-table">
        <div class="tclip">
        <table>
          <colgroup><col class="w1"><col class="w2"><col class="w3"><col class="w4"><col class="w5"><col class="w6"><col class="w7"></colgroup>
          <thead><tr><th>Name</th><th>Department</th><th>Rating</th><th>Sum of Salary</th><th>Sum of Bonus Percentage</th><th>Sum of Bonus Amount</th><th>Sum of Total Pay</th></tr></thead>
          <tbody>
          <tr><td>Anjela Spancock</td><td>Accounting</td><td>Average</td><td>$98,010</td><td>0.02</td><td>$1,960.2</td><td>$99,970.2</td></tr>
          <tr><td>Barri Teacy</td><td>Accounting</td><td>Average</td><td>$86,240</td><td>0.02</td><td>$1,724.8</td><td>$87,964.8</td></tr>
          <tr><td>Caty Janas</td><td>Accounting</td><td>Poor</td><td>$93,210</td><td>0.01</td><td>$1,118.52</td><td>$94,328.52</td></tr>
          <tr><td>Edd MacKnockiter</td><td>Accounting</td><td>Poor</td><td>$119,020</td><td>0.01</td><td>$1,428.24</td><td>$120,448.24</td></tr>
          <tr><td>Haven Belward</td><td>Accounting</td><td>Good</td><td>$89,120</td><td>0.06</td><td>$5,168.96</td><td>$94,288.96</td></tr>
          <tr><td>Hogan Iles</td><td>Accounting</td><td>Very Good</td><td>$114,180</td><td>0.07</td><td>$8,106.78</td><td>$122,286.78</td></tr>
          <tr><td>Jaime Dowe</td><td>Accounting</td><td>Average</td><td>$39,940</td><td>0.02</td><td>$798.8</td><td>$40,738.8</td></tr>
          <tr><td>Jill Shipsey</td><td>Accounting</td><td>Average</td><td>$52,960</td><td>0.02</td><td>$1,059.2</td><td>$54,019.2</td></tr>
          <tr><td>Kai Ryder</td><td>Accounting</td><td>Average</td><td>$119,930</td><td>0.02</td><td>$2,398.6</td><td>$122,328.6</td></tr>
          <tr><td>Kissiah Maydway</td><td>Accounting</td><td>Good</td><td>$106,460</td><td>0.06</td><td>$6,174.68</td><td>$112,634.68</td></tr>
          </tbody>
        </table>
        </div>
        <div class="total"><span>Total</span><span></span><span></span><span>$1,215,430</span><span>0.36</span><span>$34,282.3</span><span>$1,249,712.3</span></div>
        <div class="vscroll"><i></i></div>
      </article>
      <article class="vis c-pay">
        <svg width="340" height="295" viewBox="1036 646 340 295">
          <g class="ser"><text x="1083" y="684" textLength="266" lengthAdjust="spacingAndGlyphs">Sum of Total Pay</text></g>
          <rect x="1051.500" y="696.500" width="309" height="228" fill="#fff" stroke="#b8b4b3"/>
          <text x="1064" y="805" class="big" textLength="266" lengthAdjust="spacingAndGlyphs">$1.249712</text>
          <text x="1064" y="872" class="big" textLength="77" lengthAdjust="spacingAndGlyphs">3M</text>
        </svg>
      </article>
      <article class="vis c-dept">
        <h3>Department</h3>
        <ul class="slicer"><li class="on"><i></i><span>Accounting</span></li><li><i></i><span>Business Develop...</span></li><li><i></i><span>Engineering</span></li><li><i></i><span>Human Resources</span></li><li><i></i><span>Legal</span></li><li><i></i><span>Marketing</span></li><li><i></i><span>Product Manage...</span></li><li><i></i><span>Research and Dev...</span></li><li><i></i><span>Sales</span></li><li><i></i><span>Services</span></li><li><i></i><span>Support</span></li></ul>
        <div class="dscroll"></div>
      </article>
      <svg class="handles" width="240" height="424" viewBox="1150 206 240 424">
        <path d="M1159.500 215.500H1386M1159.500 215.500V620.500H1386" fill="none" stroke="#605e5c"/>
        <g fill="#fff" stroke="#555" stroke-width="1.200"><circle cx="1159" cy="215.500" r="7"/><circle cx="1272" cy="215.500" r="7"/><circle cx="1386" cy="215.500" r="7"/><circle cx="1159" cy="418.500" r="7"/><circle cx="1386" cy="418.500" r="7"/><circle cx="1159" cy="621.500" r="7"/><circle cx="1272" cy="621.500" r="7"/><circle cx="1386" cy="621.500" r="7"/></g>
      </svg>
      <div class="vtools">
        <span><svg viewBox="0 0 22 20"><path d="M1 2h20v1l-7.500 8v8h-5v-8L1 3z" fill="none" stroke="#777" stroke-width="1.500"/></svg></span>
        <span><svg viewBox="0 0 20 20"><path d="M11 3H1v14h18v-5M1 10h6v7M7 13h6v4M14 3h5v5M19 3l-7 7" fill="none" stroke="#777" stroke-width="1.500"/></svg></span>
        <span><svg viewBox="0 0 20 20"><path d="M0 8.500h3v3H0zM8.500 8.500h3v3h-3zM17 8.500h3v3h-3z" fill="#777"/></svg></span>
      </div>
      <div class="quick">
        <span><svg viewBox="0 0 24 26"><path d="M4 24V8h5v16M9 24V2h7v22M16 6h7v18H4" fill="#fff" stroke="#333" stroke-width="1.500"/><use href="#bolt" x="0" y="0" width="11" height="16"/></svg></span>
        <span><svg viewBox="0 0 24 24"><path d="M9 13L19 3c2-2 4 0 3 1l-9 12z" fill="#fff" stroke="#333" stroke-width="1.300"/><path d="M1 19c4 0 3-6 8-6l4 3c0 5-8 6-12 3z" fill="#84bdf0" stroke="#1064a8" stroke-width="1.300"/><path d="M18 14v10M13 19h11" stroke="#2e9b45" stroke-width="1.800"/></svg></span>
      </div>
      <div class="pagedots"></div>
    </div>
    <div class="pages">
      <div class="views">
        <svg class="desk" viewBox="0 0 24 18"><path d="M1 1h22v12H1zM12 13v4M8 17h8" fill="none" stroke="#605e5c" stroke-width="1.500"/></svg>
        <svg class="phone" viewBox="0 0 17 26"><rect x="1" y="1" width="15" height="24" rx="2" fill="none" stroke="#605e5c" stroke-width="1.500"/><path d="M7.500 21.500h2" stroke="#605e5c" stroke-width="1.500"/></svg>
        <svg class="arr" viewBox="0 0 36 12"><path d="M7 0v12L1 6zM29 0v12l6-6z" fill="#bebbb8"/></svg>
      </div>
      <a>PBI Q 1</a><a>PBI Q 2</a><a>PBI Q 3</a><a>PBI Q 4</a><a class="on">PBI Q 5</a>
      <button class="add"><svg viewBox="0 0 14 14"><path d="M7 0v14M0 7h14" stroke="#fff" stroke-width="3.500"/></svg></button>
    </div>
  </div>

  <aside class="filters">
    <svg class="dl"><use href="#dbl"/></svg>
    <svg class="fn"><use href="#funnel"/></svg>
    <b>Filters</b>
  </aside>

  <aside class="pane build">
    <header><h2>Build</h2><span class="more">···</span><svg class="dr"><use href="#dbl"/></svg></header>
    <h4>Suggestions</h4>
    <div class="vizbox">
      <i><svg><use href="#v-sbar"/></svg></i><i><svg><use href="#v-scol"/></svg></i><i><svg><use href="#v-cbar"/></svg></i><i><svg><use href="#v-ccol"/></svg></i><i><svg><use href="#v-hbar"/></svg></i><i><svg><use href="#v-hcol"/></svg></i>
      <i><svg><use href="#v-line"/></svg></i><i><svg><use href="#v-area"/></svg></i><i><svg><use href="#v-sarea"/></svg></i><i><svg><use href="#v-harea"/></svg></i><i><svg><use href="#v-lscol"/></svg></i><i><svg><use href="#v-lccol"/></svg></i>
      <i><svg><use href="#v-ribbon"/></svg></i><i><svg><use href="#v-water"/></svg></i><i><svg><use href="#v-funnel"/></svg></i><i><svg><use href="#v-scatter"/></svg></i><i><svg><use href="#v-pie"/></svg></i><i><svg><use href="#v-donut"/></svg></i>
      <i><svg><use href="#v-tree"/></svg></i><i><svg><use href="#v-map"/></svg></i><i><svg><use href="#v-filled"/></svg></i><i><svg><use href="#v-azure"/></svg></i><i><svg><use href="#v-gauge"/></svg></i><i><svg><use href="#v-card"/></svg></i>
      <i><svg><use href="#v-mcard"/></svg></i><i><svg><use href="#v-kpi"/></svg></i><i class="sel"><svg><use href="#v-slicer"/></svg></i><i><svg><use href="#v-table"/></svg></i><i><svg><use href="#v-matrix"/></svg></i><i><svg><use href="#v-r"/></svg></i>
      <i><svg><use href="#v-py"/></svg></i><i><svg><use href="#v-infl"/></svg></i><i><svg><use href="#v-decomp"/></svg></i><i><svg><use href="#v-qa"/></svg></i><i><svg><use href="#v-narr"/></svg></i><i><svg><use href="#v-goal"/></svg></i>
      <i><svg><use href="#v-pag"/></svg></i><i><svg><use href="#v-ncard"/></svg></i><i><svg><use href="#v-nslicer"/></svg></i><i><svg><use href="#v-arc"/></svg></i><i><svg><use href="#v-apps"/></svg></i><i><svg><use href="#v-auto"/></svg></i>
      <b class="more">···</b>
    </div>
    <h4 class="fl">Field</h4>
    <div class="well">
      <div class="chip"><span>Department</span><svg viewBox="0 0 16 16"><path d="M1 1l14 14M15 1L1 15" stroke="#222" stroke-width="1.400"/></svg><i></i><svg class="nx" viewBox="0 0 9 14"><path d="M1 1l7 6-7 6" fill="none" stroke="#222" stroke-width="1.500"/></svg></div>
      <div class="addd">+Add data</div>
    </div>
  </aside>

  <aside class="pane data">
    <header><h2>Data</h2><span class="more">···</span><svg class="dr"><use href="#dbl"/></svg></header>
    <div class="dsearch"><svg viewBox="0 0 18 18"><circle cx="7.500" cy="7.500" r="6.500" class="cur"/><path d="M12 12l5.500 5.500" class="cur"/></svg><span>Search</span></div>
    <ul class="tree">
      <li class="tb"><svg class="tc"><use href="#chevthin"/></svg><svg class="ti"><use href="#f-table"/></svg>Bonus Rules</li>
      <li><i></i><em></em>Average</li><li><i></i><em></em>Department</li><li><i></i><em></em>Good</li><li><i></i><em></em>Poor</li><li><i></i><em></em>Very Good</li><li><i></i><em></em>Very Poor</li>
      <li class="tb"><svg class="tc"><use href="#chevthin"/></svg><svg class="ti"><use href="#f-table"/></svg><svg class="badge" viewBox="0 0 14 14"><circle cx="7" cy="7" r="7" fill="#117865"/><path d="M4 7l2.200 2.200L10 5.500" fill="none" stroke="#fff" stroke-width="1.500"/></svg><span class="pmr">PMR-G Employee Data</span></li>
      <li><i></i><em><svg><use href="#f-calc"/></svg></em>Average Rating ...</li>
      <li><i></i><em><svg><use href="#f-sum"/></svg></em>Bonus Amount</li>
      <li><i></i><em><svg><use href="#f-sum"/></svg></em>Bonus Percenta...</li>
      <li><i></i><em><svg><use href="#f-sum"/></svg></em>Column</li>
      <li class="ck"><i><svg viewBox="0 0 14 14"><path d="M2 7l3.500 3.500L12 4" fill="none" stroke="#fff" stroke-width="1.600"/></svg></i><em></em>Department</li>
      <li><i></i><em><svg><use href="#f-calc"/></svg></em>Employees Belo...</li>
      <li><i></i><em></em>Gender</li><li><i></i><em></em>Location</li><li><i></i><em></em>Name</li>
      <li><i></i><em><svg><use href="#f-sum"/></svg></em>Numeric Rating</li>
      <li><i></i><em></em>Rating</li>
      <li><i></i><em><svg><use href="#f-calc"/></svg></em>Rating Count b...</li>
      <li><i></i><em><svg><use href="#f-sigma"/></svg></em>Salary</li>
      <li><i></i><em><svg><use href="#f-fx"/></svg></em>Salary Band</li>
      <li><i></i><em><svg><use href="#f-sum"/></svg></em>Total Pay</li>
    </ul>
  </aside>

  <aside class="rrail">
    <div class="on"><svg viewBox="0 0 24 24"><path class="k" fill="#fff" d="M4 5c0-5 16-5 16 0v14c0 5-16 5-16 0zM4 5c0 4 16 4 16 0"/></svg></div>
    <div class="on"><svg viewBox="0 0 24 24"><path class="k" d="M1 10h6v13H1zM7 23V1h7v22H7M14 7h6"/><path d="M13 13c0-3 10-3 10 0v8c0 3-10 3-10 0zM13 13c0 3 10 3 10 0" fill="#fff" stroke="#d96b00" stroke-width="1.500"/></svg></div>
    <div><svg viewBox="0 0 24 24"><path class="k" d="M5 19H1V9h6M7 17V1h7v9M14 5h6"/><path class="k" fill="#fff" d="M11 17L21 8l3 1-9 11z"/><path d="M4 23c4-1 3-6 7-6l4 3c0 4-7 5-11 3z" fill="#6aaeea" stroke="#1064a8"/></svg></div>
    <div><svg viewBox="0 0 24 24"><path d="M12 1v22M1 12h22" stroke="#111" stroke-width="1.800"/></svg></div>
    <div class="gear"><svg viewBox="0 0 24 24"><path d="M9.500 4.500L10.500 1h3l1 3.500 2.500 1.500 3.500-1 1.700 3-2.500 2.600v2.800l2.500 2.600-1.700 3-3.500-1-2.500 1.500-1 3.500h-3l-1-3.500L7 18l-3.500 1-1.700-3 2.500-2.600v-2.800L1.800 8l1.700-3L7 6z" fill="none" stroke="#333" stroke-width="1.700" stroke-linejoin="round"/><circle cx="12" cy="12" r="3.500" fill="none" stroke="#333" stroke-width="1.700"/></svg></div>
  </aside>
</main>

<footer class="status">
  <span class="pg">Page 5 of 5</span>
  <div class="zoom"><svg width="156" height="20" viewBox="0 0 156 20"><path d="M1 9.500h6M145 10h10M150 5v10" stroke="#605e5c" stroke-width="2"/><path d="M13 10h125M75.500 6v8" stroke="#605e5c" stroke-width="1.500"/><path d="M61 3.500h5v13h-5z" fill="#605e5c"/></svg><span>83%</span><svg width="21" height="16" viewBox="0 0 21 16"><path d="M1 1h19v14H1z" fill="none" stroke="#6b6966" stroke-width="1.800"/><path d="M5 6V4h3M13 4h3v2M16 10v2h-3M8 12H5v-2" fill="none" stroke="#5c6f80" stroke-width="1.300"/></svg></div>
</footer>

<footer class="taskbar">
  <div class="start"><svg width="20" height="20" viewBox="0 0 20 20"><path d="M0 3l9-1.500V9.500H0zM10 1.300L20 0v9.500H10zM0 10.500h9v8L0 17zM10 10.500h10V20l-10-1.400z" fill="#fff"/></svg></div>
  <div class="wsearch"><svg width="21" height="21"><use href="#mag"/></svg>Search</div>
  <div class="apps a1">
    <i><svg viewBox="0 0 22 22"><path d="M1 1v3h13V1M1 7h13v8H1zM1 21v-3h13v3M19 1v20" fill="none" stroke="#fff" stroke-width="1.400"/><path d="M18 6h3v4h-3z" fill="#fff"/></svg></i>
    <i><svg><use href="#copilot"/></svg></i>
    <i class="run"><svg viewBox="0 0 22 22"><path d="M2 3h7l2 3h9v14H2z" fill="#e8a713"/><path d="M2 8h18v12H2z" fill="#ffd75e"/><path d="M6 20v-7h10v7h-3v-4H9v4z" fill="#3f94dd"/></svg></i>
    <i><svg viewBox="0 0 22 22"><path d="M2 5h18v16H2z" fill="#fff"/><path d="M7 5V2h8v3" fill="none" stroke="#35aee8" stroke-width="1.600"/><path d="M6 8h4.500v4.500H6z" fill="#f25022"/><path d="M11.500 8H16v4.500h-4.500z" fill="#7fba00"/><path d="M6 13.500h4.500V18H6z" fill="#00a4ef"/><path d="M11.500 13.500H16V18h-4.500z" fill="#ffb900"/></svg></i>
    <i><svg viewBox="0 0 22 22"><path d="M5 7l8-6 8 6v14H5z" fill="#28a8ea"/><path d="M5 12l16 9H5z" fill="#0f5fb8"/><path d="M1 6h11v11H1z" fill="#0f6cbd"/><circle cx="6.500" cy="11.500" r="3" fill="none" stroke="#fff" stroke-width="1.700"/></svg></i>
    <i><svg viewBox="0 0 22 22"><path d="M2 3c3-3 6-1 9-1s6-2 9 1c2 4-1 9-4 11-2 0-2 0-3 1v6h-3l-1-7c-4 4-5 1-6-3-1-3-2-6-1-8z" fill="#39648f" stroke="#a9c4de" stroke-width="1.200"/><path d="M8 3c-2 4-1 7 1 11M14 3c2 4 1 8-1 11" fill="none" stroke="#dbe8f4"/></svg></i>
    <i><svg viewBox="0 0 22 22"><path d="M6 1h15v20H6z" fill="#21a366"/><path d="M13 11h8v10h-8z" fill="#107c41"/><path d="M1 5h12v12H1z" fill="#107c41"/><path d="M4 7.500l6 7M10 7.500l-6 7" stroke="#fff" stroke-width="1.700"/></svg></i>
    <i><svg viewBox="0 0 22 22"><path d="M6 1h15v20H6z" fill="#2b7cd3"/><path d="M6 12h15v9H6z" fill="#103f91"/><path d="M1 5h12v12H1z" fill="#185abd"/><path d="M3 7.500l2 7 2-6 2 6 2-7" fill="none" stroke="#fff" stroke-width="1.400"/></svg></i>
    <i><svg viewBox="0 0 22 22"><path d="M1 1h17v16H1z" fill="#2d4350" stroke="#6a8190"/><path d="M4 5h7M4 8h5" stroke="#3fb27a"/><path d="M8 15v-3c0-3 8-3 8 0v4h-5c-3 0-3 1-3 3-2 0-2-4 0-4z" fill="#6aa5d8"/><path d="M19 11c3 4 2 7-2 7v3h-6v-4h6c2 0 2-2 2-6z" fill="#ffd43b"/></svg></i>
    <i><svg viewBox="0 0 22 22"><path d="M2 12C2 7 4 5 5 3l2 3c1-1 3-1 4-1l2-5c4 3 8 7 8 12a9.500 9.500 0 0 1-19 0z" fill="url(#ffG)"/><circle cx="11" cy="12" r="4.500" fill="#7a3fd0"/></svg></i>
    <i><svg viewBox="0 0 22 22"><path d="M0 0h22v22H0z" fill="#f7e9e6"/><path d="M3 18L10 3h3l6 15h-4l-1-4H8l-1.500 4zM9 11h4l-1.500-5z" fill="#b3192b"/></svg></i>
    <i><svg viewBox="0 0 22 22"><rect y="3" width="22" height="16" rx="4" fill="#f00"/><path d="M8.500 7.500l7 3.500-7 3.500z" fill="#fff"/></svg></i>
    <i><svg viewBox="0 0 22 22"><path d="M1 4h20v15H1z" fill="#fff" stroke="#888"/><path d="M7 7h8v9H7z" fill="#0f78d4"/><path d="M3 8h3M3 11h3M3 14h3M16 8h3M16 11h3M16 14h3" stroke="#888"/></svg></i>
    <i class="run"><svg viewBox="0 0 22 22"><circle cx="11" cy="11" r="10" fill="url(#edgeG)"/><path d="M9 20c-4-3-4-9 1-11 3-1 5 1 4 4 2 2 5 1 7-1 0 5-6 10-12 8z" fill="#0b3f86"/></svg></i>
    <i class="run"><svg viewBox="0 0 22 22"><path d="M4 2c3-2 8-2 10 0v12c-3 2-8 2-10 0z" fill="#f6c62c"/><path d="M10 12l8 8M18 12l-8 8" stroke="#9b5cc0" stroke-width="2"/><path d="M16 1h5v6M2 14v6h5" fill="none" stroke="#3aa75a" stroke-width="1.500"/></svg></i>
    <i class="run"><svg viewBox="0 0 22 22"><path d="M2 20.500l1.500-5A9.300 9.300 0 1 1 7 19z" fill="none" stroke="#25d366" stroke-width="2"/><path d="M7 6c-2 3 3 9 8 9 2-1 1-2-1-3l-1.500 1C11 12 10 11 9 9.500L10 8z" fill="#25d366"/></svg></i>
    <i class="run act"><svg viewBox="0 0 22 22"><path d="M12 0h8v22h-8z" fill="#e6ad10"/><path d="M7 6h8v16H7z" fill="#f2c811"/><path d="M2 11h8v11H2z" fill="#ffe26b"/></svg></i>
    <i class="run"><svg viewBox="0 0 22 22"><circle cx="11" cy="11" r="10.500" fill="#fbc116"/><path d="M11 11L2 5.500A10.500 10.500 0 0 1 20.500 6H11z" fill="#e33b2e"/><path d="M11 11l-1 10.500A10.500 10.500 0 0 1 2 5.500z" fill="#2da94f"/><circle cx="11" cy="11" r="5" fill="#fff"/><circle cx="11" cy="11" r="3.900" fill="#3b7ded"/></svg></i>
    <i class="run"><svg viewBox="0 0 22 22"><path d="M9.500 1h3L18 17H4z" fill="#f58220"/><path d="M8.500 5h5l1.300 4H7.200zM6 13h10l1 3H5z" fill="#fff"/><path d="M3 16h16l2 5H1z" fill="#f58220"/></svg></i>
  </div>
  <div class="tray">
    <svg class="umb" viewBox="0 0 30 30"><path d="M1 17C2 9 9 5 15 6s10 6 10 13c-3-3-5-3-8-1-3-3-5-3-8-1-3-2-5-2-8 0z" fill="#6db7f0"/><path d="M14 7l-1 20c0 3-4 3-4 0" fill="none" stroke="#8a93a0" stroke-width="1.600"/><path d="M17 1l-1 3M22 0l-1 3M27 1l-1 3M24 6l-1 3M29 8l-1 3" stroke="#4ea4ea" stroke-width="1.600"/></svg>
    <span class="wth">Downpour tomorrow</span>
    <svg class="up" viewBox="0 0 16 9"><path d="M1 8l7-7 7 7" fill="none" stroke="#fff" stroke-width="1.400"/></svg>
    <svg class="bat" viewBox="0 0 21 14"><path d="M5 3h13v9H3V8M19 5h1.500v4H19M0 2h6M1 0v4M5 0v4M3 4v4" fill="none" stroke="#fff" stroke-width="1.300"/><path d="M7 5h4v5H7z" fill="#fff"/></svg>
    <svg class="wifi" viewBox="0 0 16 16"><path d="M1 15C1 7 7 1 15 1M5 15c0-6 4-10 10-10M9 15c0-4 2-6 6-6M12 15c0-2 1-3 3-3" fill="none" stroke="#ddd" stroke-width="1.200"/></svg>
    <svg class="vol" viewBox="0 0 20 16"><path d="M1 5h3l4-4v14l-4-4H1z" fill="none" stroke="#fff" stroke-width="1.200"/><path d="M10 5c2 2 2 4 0 6M13 3c3 3 3 7 0 10" fill="none" stroke="#fff" stroke-width="1.200"/><path d="M16 1c4 4 4 10 0 14" fill="none" stroke="#888" stroke-width="1.200"/></svg>
    <span class="clk">8:10 PM</span>
    <svg class="note" viewBox="0 0 20 20"><path d="M0 0h20v16h-6l-4 4v-4H0z" fill="#fff"/><path d="M4 4.500h12M4 8h12M4 11.500h8" stroke="#222" stroke-width="1.400"/></svg>
  </div>
</footer>
</body>
</html>
```
FILE: styles.css
```css
* { box-sizing: border-box; }
html, body { margin: 0; height: 1080px; overflow: hidden; }
body { display: flex; flex-direction: column; font-family: "Open Sans", "Noto Sans", sans-serif; font-size: 14px; color: #252423; background: #f3f2f1; }
ul, h1, h2, h3, h4, p, article { margin: 0; padding: 0; }
ul { list-style: none; }
button { border: 0; padding: 0; font: inherit; color: inherit; }
i, em { font-style: normal; }
svg { display: block; flex: none; }
.defs { position: absolute; width: 0; height: 0; }
.syms { display: none; }
.k { fill: none; stroke: #3b3a39; stroke-width: 1.6; }
.k[fill="#fff"] { fill: #fff; }
.k[fill="#f7f7f7"] { fill: #f7f7f7; }
.k1 { fill: none; stroke: #666; stroke-width: 1.3; }
.b { fill: #84bdf0; stroke: #1064a8; stroke-width: 1.3; }
.g { fill: #c8c6c4; stroke: #797775; stroke-width: 1.3; }
.g0, .gr { fill: none; stroke: #797775; stroke-width: 1.4; }
.cur { fill: none; stroke: currentColor; stroke-width: 1.4; }
.dots { fill: none; stroke: #333; stroke-width: 4; stroke-dasharray: 4 2.5; }
.t123 { fill: #1f86c9; font-family: "Open Sans", sans-serif; }
.fx { fill: #b5b3b1; font-family: "Liberation Serif", serif; }
.dax { fill: #605e5c; font-weight: 600; }
.i20 { width: 20px; height: 20px; }
.w14 { width: 14px; height: 14px; }

/* title bar */
.titlebar { flex: none; height: 43px; background: #3b3a38; color: #fff; display: grid; grid-template-columns: 746px 500px 1fr; }
.tb-left { display: flex; align-items: center; padding-left: 20px; gap: 18px; }
.tb-title { font-size: 14.5px; margin: 5px 0 0 -8px; letter-spacing: -.12px; }
.tb-search { margin: 6px 0 7px; background: #d4d4d2; border-radius: 3px; display: flex; align-items: center; gap: 16px; padding-left: 21px; font-size: 15.5px; color: #2c5c50; }
.tb-search span { padding-top: 1px; }
.tb-search svg { color: #333; }
.tb-right { display: flex; align-items: center; justify-content: flex-end; padding-right: 20px; }
.signin { font-size: 14.4px; margin-right: 13px; }
.avatar { width: 26px; height: 26px; margin-right: 40px; }
.tb-right .w14 + .w14 { margin-left: 41px; }

/* ribbon tabs */
.tabs { flex: none; height: 41px; background: #fafafa; display: flex; font-size: 16.5px; }
.tabs a { display: flex; justify-content: center; align-items: center; height: 38px; line-height: 40px; }
.t1 { width: 82px; } .t2 { width: 86px; } .t3 { width: 83px; } .t4 { width: 113px; } .t5 { width: 78px; } .t6 { width: 106px; } .t7 { width: 77px; } .t8 { width: 94px; margin-right: 5px; } .t9 { width: 124px; }
.tabs b { font-weight: 700; letter-spacing: -.4px; border-bottom: 3px solid #117865; height: 38px; }
.tabs .ctx { background: #fff; color: #117865; font-weight: 600; letter-spacing: -.05px; }
.tabs .t7 { padding-left: 2px; }
.share { width: 105px; height: 30px; margin: 5px 7px 0 auto; background: #117865; color: #fff; border-radius: 4px; display: flex; align-items: center; justify-content: center; font-size: 14.600px; gap: 5px; letter-spacing: -.3px; }
.share .i20 { margin-right: 5px; }
.shc { width: 13px; height: 8px; }

/* ribbon */
.ribbon { flex: none; height: 116px; background: #fafafa; display: flex; padding-top: 4px; position: relative; z-index: 3; box-shadow: 0 1px 4px rgba(0,0,0,.22); }
.grp { height: 110px; border-right: 1px solid #d0cecc; display: flex; flex-direction: column; justify-content: space-between; }
.grp p { font-size: 12.2px; line-height: 16px; text-align: center; margin-bottom: -2px; letter-spacing: -.1px; }
.btns { display: grid; padding-top: 5px; }
.g-clip { width: 201px; } .g-clip .btns { grid-template-columns: 70px 1fr; }
.g-data { width: 449px; } .g-data .btns { grid-template-columns: 60px 60px 78px 40px 60px 61px 77px; padding-left: 5px; }
.g-query { width: 145px; } .g-query .btns { grid-template-columns: 65px 59px; padding-left: 12px; }
.g-insert { width: 510px; } .g-insert .btns { grid-template-columns: 48px 322px 60px 52px; padding-left: 11px; }
.g-calc { width: 233px; } .g-calc .btns { grid-template-columns: 82px 69px 52px; padding-left: 15px; }
.g-sens { width: 92px; } .g-share { width: 74px; }
.g-cop { width: 165px; } .g-cop .btns { grid-template-columns: 86px 58px; padding-left: 12px; }
.rb { min-width: 0; display: flex; flex-direction: column; align-items: center; white-space: nowrap; text-align: center; font-size: 14.2px; line-height: 20px; letter-spacing: -.1px; }
.rb > span { margin-top: 3px; }
.off { color: #c2c0be; }
.ric { width: 36px; height: 40px; }
.ric.wide { width: 40px; margin-left: 2px; }
.r2 { margin-left: 2px; } .r3 { margin-left: 4px; } .r4 { margin-left: 5px; }
.l2 { margin-right: 3px; } .l7 { margin-right: 9px; }
.paste .ric { margin-left: 6px; }
.cv { display: inline-block; width: 9px; height: 6px; margin-left: 3px; vertical-align: 1px; }
.clip { display: flex; flex-direction: column; gap: 10px; font-size: 14.2px; margin: -1px 0 0 -4px; }
.clip li { display: flex; align-items: center; gap: 4px; height: 20px; white-space: nowrap; letter-spacing: -.1px; }
.gallery { width: 316px; height: 78px; margin: 3px 0 0 6px; border: 1.500px solid #8a8886; background: #fff; display: flex; }
.gal-grid { flex: 1; display: grid; grid-template-columns: repeat(9, 32.5px); grid-template-rows: 38px 36px; padding-left: 1px; }
.gal-grid i { display: grid; place-items: center; }
.gal-grid svg { width: 20px; height: 20px; }
.gal-grid .sel { border: 1.500px solid #605e5c; background: #f0f0f0; margin: 4px 1px; }
.gal-more { width: 20px; border-left: 1.500px solid #8a8886; display: grid; place-items: center; }
.gal-more .cv { margin: 0; }
.collapse { position: absolute; right: 6px; top: 102px; width: 12px; height: 8px; }

/* work area */
.work { flex: none; height: 812px; display: grid; grid-template-columns: 50px 1337px 40px 226px 226px 41px; border-bottom: 1px solid #d6d4d2; }
.work > * { min-width: 0; min-height: 0; }
.rail { background: #f3f2f1; border-right: 1px solid #d6d4d2; }
.rail div { height: 50px; display: grid; place-items: center; border-left: 3px solid transparent; }
.rail div.on { border-color: #117865; }
.rail .up2 { padding-bottom: 3px; }
.rail svg { width: 21px; height: 21px; }
.center { display: flex; flex-direction: column; border-right: 1px solid #a19f9d; }
.canvas { height: 768px; position: relative; overflow: hidden; background: #fff; }
.vis { position: absolute; background: #f7dcde; border: 10px solid #e68f96; border-radius: 32px; box-shadow: 8px 9px 12px rgba(0,0,0,.3); }
.c-region { left: 1px; top: 0; width: 414px; height: 421px; }
.c-bonus { left: 461px; top: 141px; width: 414px; height: 280px; }
.c-loc { left: 916px; top: 192px; width: 160px; height: 176px; padding: 16px 0 0 23px; }
.c-dept { left: 1109px; top: 16px; width: 227px; height: 405px; padding: 14px 0 0 22px; }
.c-table { left: 1px; top: 436px; width: 956px; height: 315px; padding: 15px 0 0 16px; }
.c-pay { left: 976px; top: 436px; width: 360px; height: 315px; }
.canvas h1 { position: absolute; left: 483px; top: 22px; font-size: 32px; line-height: 44px; font-weight: 700; letter-spacing: .06px; word-spacing: 2.700px; white-space: nowrap; }
.ser text { font: 700 31px "Liberation Serif", serif; fill: #d64550; }
.grid { stroke: #c8c0c0; stroke-width: 1.2; stroke-dasharray: 1.2 4; fill: none; }
.ax { font-size: 12.5px; fill: #605e5c; }
.din { font: 400 14.500px Roboto, sans-serif; fill: #252423; stroke: #252423; stroke-width: .3px; }
.big { font: 700 60px Roboto, sans-serif; fill: #252423; }
.vis h3 { font: 400 14.5px/20px Roboto, sans-serif; -webkit-text-stroke: .3px #252423; letter-spacing: .2px; display: flex; align-items: center; }
.lc { width: 14px; height: 8px; margin: -6px 0 0 24px; }
.slicer li { height: 30.250px; display: flex; align-items: center; gap: 8px; font-size: 15.800px; white-space: nowrap; letter-spacing: -.1px; }
.slicer i { width: 17px; height: 17px; border: 1px solid #7a7574; flex: none; margin-top: -2px; }
.slicer .on i { background: #222; border-color: #222; }
.c-loc .slicer { margin-top: 0; }
.c-loc .slicer li { height: 30.600px; }
.c-dept .slicer { width: 161px; overflow: hidden; margin-top: 0; }
.c-dept .slicer li { padding-left: 1px; gap: 7.500px; }
.dscroll { position: absolute; left: 184px; top: 33px; width: 8px; height: 312px; background: #8b8785; }
.handles { position: absolute; left: 1100px; top: 6px; }
.vtools { position: absolute; left: 1236px; top: 423px; display: flex; gap: 3px; }
.vtools span { width: 31px; height: 28px; background: #fff; display: grid; place-items: center; }
.vtools svg { width: 20px; height: 20px; }
.quick { position: absolute; left: 1064px; top: 15px; display: flex; flex-direction: column; gap: 15px; }
.quick span { width: 35px; height: 35px; background: #e1dfdd; border: 1px solid #cfcdcb; border-radius: 2px; box-shadow: 0 2px 4px rgba(0,0,0,.3); display: grid; place-items: center; }
.quick svg { width: 24px; height: 25px; }
.pagedots { position: absolute; left: 4px; right: 0; top: 751px; height: 2px; background: repeating-linear-gradient(90deg, #444 0 2px, transparent 2px 4px); }

/* table visual */
.tclip { width: 810px; height: 244px; overflow: hidden; border-bottom: 2px solid #4f9fee; }
table { width: 810px; table-layout: fixed; border-collapse: collapse; font-size: 13.200px; }
.w1 { width: 121px; } .w2 { width: 86px; } .w3 { width: 76px; } .w4 { width: 95px; } .w5 { width: 169px; } .w6 { width: 150px; } .w7 { width: 113px; }
th, td { padding: 0 5px; text-align: left; font-weight: 400; white-space: nowrap; border-right: 1px solid #f8efef; background: #fff; letter-spacing: -.12px; }
th { height: 30px; padding-bottom: 7px; border-bottom: 1.500px solid #4fa3f0; }
td { height: 21.950px; line-height: 20px; border-bottom: 1px solid #e6e4e4; }
tr > :nth-child(n+4) { text-align: right; padding-left: 0; }
tbody tr:nth-child(even) td { background: #ececec; }
.total { width: 810px; display: grid; grid-template-columns: 121px 86px 76px 95px 169px 150px 113px; font-size: 12.800px; font-weight: 700; line-height: 22px; }
.total span { padding: 0 5px; }
.total span:nth-child(n+4) { text-align: right; }
.vscroll { position: absolute; left: 910px; top: 16px; width: 10px; height: 263px; border-radius: 5px; background: #fdeced; }
.vscroll i { display: block; width: 8px; margin-left: 1px; height: 197px; border-radius: 4px; background: #ab9a9b; }

/* page tabs */
.pages { height: 43px; background: #f3f2f1; display: flex; }
.views { position: relative; width: 161px; border-right: 1px solid #979593; display: flex; align-items: center; }
.desk { width: 26px; height: 19px; margin: -8px 0 0 15px; }
.phone { width: 17px; height: 26px; margin: -6px 0 0 34px; }
.arr { width: 36px; height: 12px; margin-left: 25px; }
.pages a { width: 99.600px; background: #fff; border-right: 1px solid #c8c6c4; display: grid; place-items: center; font-size: 14.700px; padding: 2px 0 0; letter-spacing: -.2px; }
.pages a.on { font-weight: 700; letter-spacing: -.5px; border-bottom: 5px solid #117865; padding-top: 6px; width: 102px; }
.add { width: 49px; background: #117865; display: grid; place-items: center; padding-bottom: 3px; }
.add svg { width: 14px; height: 14px; }
.views::after { content: ""; position: absolute; left: 14px; top: 35px; width: 30px; height: 3px; background: #117865; border-radius: 2px; }

/* filters */
.filters { background: #fff; height: 768px; padding: 15px 0 0 12px; }
.dl { width: 16px; height: 16px; transform: scaleX(-1); }
.fn { width: 16px; height: 14px; transform: rotate(90deg); margin: 21px 0 0 4px; }
.filters b { display: block; writing-mode: vertical-rl; font-size: 17.200px; font-weight: 600; line-height: 20px; margin: 11px 0 0 -2px; }

/* panes */
.pane { background: #f3f2f1; border-left: 1px solid #d6d4d2; padding: 0 10px 0 10px; }
.pane header { display: flex; align-items: center; height: 49px; }
.pane h2 { font-size: 18.500px; font-weight: 700; letter-spacing: -.3px; flex: 1; }
.more { letter-spacing: 1.800px; font-weight: 400; font-size: 16px; margin-right: 9px; }
.dr { width: 16px; height: 16px; }
.pane h4 { font-size: 14.200px; font-weight: 400; line-height: 18px; height: 23px; }
.vizbox { height: 266px; border: 1px solid #8a8886; background: #fff; padding: 2px 4px 0; display: grid; grid-template-columns: repeat(6, 32.500px); grid-template-rows: repeat(7, 32.500px) 20px; }
.vizbox i { display: grid; place-items: center; margin: 2px; }
.vizbox svg { width: 23px; height: 23px; }
.vizbox .sel { border: 1px solid #222; margin: 1px; }
.vizbox b { padding-left: 6px; line-height: 24px; font-weight: 700; }
.pane h4.fl { margin-top: 13px; }
.well { border: 1px dashed #605e5c; background: #fff; height: 90px; padding: 5px; display: grid; gap: 5px; }
.well > div { height: 37px; border: 1px solid #605e5c; border-radius: 2px; display: flex; align-items: center; font-size: 14.200px; }
.chip { background: #fafafa; padding-left: 7px; }
.chip span { flex: 1; }
.chip svg { width: 15px; height: 15px; }
.chip i { width: 1px; height: 20px; background: #444; margin: 0 14px 0 10px; }
.chip .nx { width: 9px; height: 14px; margin-right: 12px; }
.addd { justify-content: center; font-weight: 600; }
.data { padding: 0 6px 0 5px; }
.data header { padding: 0 5px; }
.dsearch { height: 30px; margin-top: 8px; background: #fff; border: 1px solid #c8c6c4; border-bottom-color: #444; border-radius: 4px; display: flex; align-items: center; gap: 9px; padding-left: 15px; font-size: 15.700px; color: #707070; }
.dsearch span { padding-top: 2px; }
.dsearch svg { width: 18px; height: 18px; color: #444; }
.tree { padding-top: 11px; }
.tree li { height: 30.010px; display: flex; align-items: center; font-size: 14.200px; white-space: nowrap; color: #33322f; padding-left: 50px; letter-spacing: -.05px; }
.tree li i { width: 15px; height: 15px; border: 1px solid #76736f; border-radius: 2px; flex: none; }
.tree li em { width: 32px; padding-left: 9px; flex: none; }
.tree em svg { width: 18px; height: 18px; color: #3b3a39; }
.tree .ck i { background: #117865; border-color: #117865; }
.tree .ck svg { width: 13px; height: 13px; }
.tree .tb { padding-left: 11px; position: relative; }
.pmr { letter-spacing: .1px; }
.tc { width: 15px; height: 9px; color: #444; margin-right: 5px; }
.ti { width: 17px; height: 17px; color: #333; margin-right: 6px; }
.badge { position: absolute; left: 38px; top: 14px; width: 15px; height: 15px; }

/* right rail */
.rrail { background: #faf9f8; border-left: 1px solid #d6d4d2; display: flex; flex-direction: column; }
.rrail div { height: 40px; display: grid; place-items: center; }
.rrail svg { width: 24px; height: 24px; }
.rrail .on { background: #dddbda; border: 1px solid #605e5c; }
.rrail .gear { margin-top: auto; border-top: 1px solid #d6d4d2; }
.rrail .gear svg { width: 26px; height: 26px; }

/* status bar */
.status { flex: none; height: 30px; display: flex; justify-content: space-between; align-items: center; padding: 1px 22px 0 5px; font-size: 14.500px; color: #444; letter-spacing: -.05px; }
.zoom { display: flex; align-items: center; }
.zoom span { margin: 0 23px 0 15px; color: #605e5c; }

/* taskbar */
.taskbar { flex: none; height: 38px; display: flex; color: #fff; background: linear-gradient(90deg, #2c3336 0, #342f2e 32%, #3c2b23 52%, #1c2531 63%, #1d2130 80%, #231f2b 89%, #1f2b2f 100%); }
.start { width: 45px; display: grid; place-items: center; }
.wsearch { width: 323px; background: #f2f2f2; border: 1px solid #bbb; color: #333; font-size: 18px; display: flex; align-items: center; gap: 14px; padding-left: 14px; }
.apps { display: flex; width: 876px; }
.apps i { width: 46.100px; display: grid; place-items: center; position: relative; }
.apps svg { width: 21px; height: 21px; }
.run::after { content: ""; position: absolute; left: 5px; right: 5px; bottom: 0; height: 3px; background: #76b9ed; }
.apps .act { background: #53565b; }
.act::after { left: 0; right: 0; }
.tray { flex: 1; display: flex; align-items: center; padding-left: 187px; }
.umb { width: 30px; height: 30px; }
.wth { font-size: 17px; margin-left: 9px; width: 168px; white-space: nowrap; letter-spacing: 0; }
.up { width: 16px; height: 9px; margin-left: 24px; }
.bat { width: 21px; height: 14px; margin-left: 12px; }
.wifi { width: 16px; height: 16px; margin-left: 13px; }
.vol { width: 20px; height: 16px; margin-left: 10px; }
.clk { font-size: 14.200px; margin-left: 19px; width: 52px; white-space: nowrap; letter-spacing: -.2px; }
.note { width: 20px; height: 20px; margin-left: 27px; }
```
